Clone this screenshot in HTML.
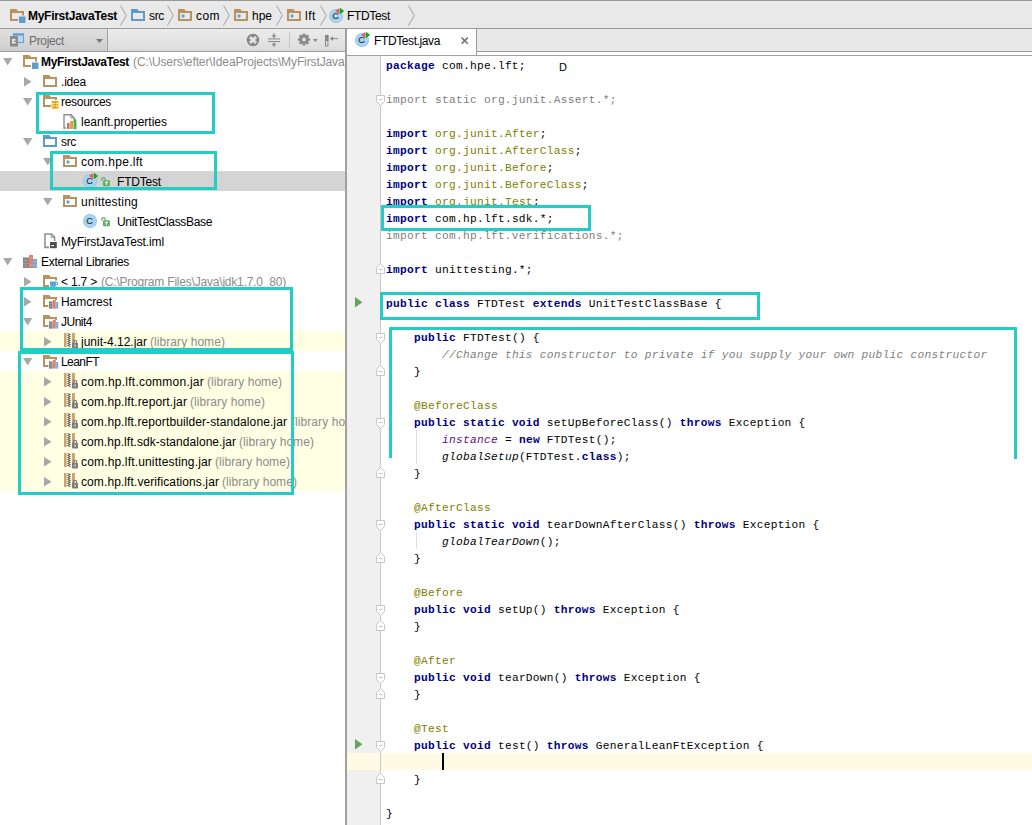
<!DOCTYPE html>
<html><head><meta charset="utf-8"><title>FTDTest</title>
<style>
html,body{margin:0;padding:0}
body{width:1032px;height:825px;position:relative;overflow:hidden;background:#fff;font-family:"Liberation Sans",sans-serif;font-size:12px;color:#000}
.a{position:absolute}
.i{position:absolute;overflow:visible}
.t{position:absolute;white-space:pre;line-height:20px;height:20px}
.b{font-weight:bold}
.g{color:#8c8c8c}
.box{position:absolute;box-sizing:border-box;border:3px solid #23cdc5}
#left{left:0;top:52px;width:345px;height:773px;overflow:hidden;background:#fff}
.row{position:absolute;left:0;width:345px;height:20px}
.code{position:absolute;left:386px;white-space:pre;font-family:"Liberation Mono",monospace;font-size:11.2px;letter-spacing:0.279px;line-height:17px;height:17px;color:#000}
.k{color:#000080;font-weight:bold}
.an{color:#808000}
.u{color:#808080}
.c{color:#808080;font-style:italic}
.sf{color:#660e7a;font-style:italic}
.sm{font-style:italic}
</style></head><body>

<div class="a" style="left:0;top:0;width:1032px;height:28px;background:#e9e9e9;border-top:1px solid #999;box-sizing:border-box"></div>
<div class="a" style="left:0;top:28px;width:1032px;height:1px;background:#999"></div>
<svg class="i" style="left:10px;top:9px" width="16" height="14" viewBox="0 0 16 14"><path d="M0 0H6.2L8 2H14V12H0Z" fill="#b8935f"/><rect x="2" y="4" width="10" height="6" fill="#e9e9e9"/><rect x="8" y="6.5" width="8" height="7.5" fill="#e9e9e9"/><rect x="9" y="7.5" width="6.5" height="6.5" fill="#5f9fcb"/></svg>
<span id="t0" class="t b" style="left:28px;top:6px;letter-spacing:-0.277px;">MyFirstJavaTest</span>
<svg class="i" style="left:120px;top:5px" width="8" height="22" viewBox="0 0 8 22"><path d="M0.5 0.5L6.3 10.5L0.5 20.5" fill="none" stroke="#a0a0a0" stroke-width="1"/></svg>
<svg class="i" style="left:131px;top:9px" width="16" height="14" viewBox="0 0 16 14"><path d="M0 0H6.2L8 2H14V12H0Z" fill="#5f9bc8"/><rect x="2" y="4" width="10" height="6" fill="#fff"/><rect x="2" y="4" width="10" height="6" fill="#e9e9e9"/></svg>
<span id="t1" class="t " style="left:149px;top:6px;letter-spacing:-0.333px;">src</span>
<svg class="i" style="left:167px;top:5px" width="8" height="22" viewBox="0 0 8 22"><path d="M0.5 0.5L6.3 10.5L0.5 20.5" fill="none" stroke="#a0a0a0" stroke-width="1"/></svg>
<svg class="i" style="left:178px;top:9px" width="16" height="14" viewBox="0 0 16 14"><path d="M0 0H6.2L8 2H14V12H0Z" fill="#b8935f"/><rect x="2" y="4" width="10" height="6" fill="#fff"/><rect x="2" y="4" width="10" height="6" fill="#e9e9e9"/><circle cx="5" cy="7" r="1.7" fill="#6ba4cd"/></svg>
<span id="t2" class="t " style="left:196px;top:6px;letter-spacing:0.443px;">com</span>
<svg class="i" style="left:223px;top:5px" width="8" height="22" viewBox="0 0 8 22"><path d="M0.5 0.5L6.3 10.5L0.5 20.5" fill="none" stroke="#a0a0a0" stroke-width="1"/></svg>
<svg class="i" style="left:234px;top:9px" width="16" height="14" viewBox="0 0 16 14"><path d="M0 0H6.2L8 2H14V12H0Z" fill="#b8935f"/><rect x="2" y="4" width="10" height="6" fill="#fff"/><rect x="2" y="4" width="10" height="6" fill="#e9e9e9"/><circle cx="5" cy="7" r="1.7" fill="#6ba4cd"/></svg>
<span id="t3" class="t " style="left:252px;top:6px;letter-spacing:-0.010px;">hpe</span>
<svg class="i" style="left:276px;top:5px" width="8" height="22" viewBox="0 0 8 22"><path d="M0.5 0.5L6.3 10.5L0.5 20.5" fill="none" stroke="#a0a0a0" stroke-width="1"/></svg>
<svg class="i" style="left:287px;top:9px" width="16" height="14" viewBox="0 0 16 14"><path d="M0 0H6.2L8 2H14V12H0Z" fill="#b8935f"/><rect x="2" y="4" width="10" height="6" fill="#fff"/><rect x="2" y="4" width="10" height="6" fill="#e9e9e9"/><circle cx="5" cy="7" r="1.7" fill="#6ba4cd"/></svg>
<span id="t4" class="t " style="left:305px;top:6px;letter-spacing:0.552px;">lft</span>
<svg class="i" style="left:320px;top:5px" width="8" height="22" viewBox="0 0 8 22"><path d="M0.5 0.5L6.3 10.5L0.5 20.5" fill="none" stroke="#a0a0a0" stroke-width="1"/></svg>
<svg class="i" style="left:329px;top:9px" width="16" height="16" viewBox="0 0 16 16"><circle cx="7" cy="7" r="7" fill="#8fc3ea"/><circle cx="7" cy="7" r="6.2" fill="#a9d5f3"/><text x="6.6" y="10.3" font-family="Liberation Sans, sans-serif" font-size="9.2" text-anchor="middle" fill="#26333d" stroke="#26333d" stroke-width="0.15">C</text><path d="M10.4 -1V5L6 2Z" fill="#d9625b"/><path d="M11 -1.2V5.2L15.2 2Z" fill="#10a813"/></svg>
<span id="t5" class="t " style="left:347px;top:6px;letter-spacing:-0.335px;">FTDTest</span>
<svg class="i" style="left:408px;top:5px" width="8" height="22" viewBox="0 0 8 22"><path d="M0.5 0.5L6.3 10.5L0.5 20.5" fill="none" stroke="#a0a0a0" stroke-width="1"/></svg>
<div class="a" style="left:0;top:29px;width:345px;height:22px;background:linear-gradient(#ececec,#dcdcdc)"></div>
<div class="a" style="left:0;top:29px;width:108px;height:22px;background:linear-gradient(#e0e0e0,#cecece);border-right:1px solid #a2a2a2;box-sizing:border-box"></div>
<div class="a" style="left:0;top:51px;width:345px;height:1px;background:#9e9e9e"></div>
<svg class="i" style="left:9px;top:33px" width="16" height="14" viewBox="0 0 16 14"><rect x="4.5" y="1" width="10" height="8.5" fill="#b5daf5" stroke="#6aa3cf" stroke-width="1"/><rect x="4" y="0.5" width="11" height="2" fill="#5d9ccb"/><rect x="1" y="3" width="8" height="10.5" fill="#8c8c8c"/><rect x="3.4" y="6.2" width="3.2" height="1.3" fill="#fff"/><rect x="3.4" y="9" width="3.2" height="1.3" fill="#fff"/><rect x="3.4" y="6.2" width="1.1" height="4.1" fill="#fff"/></svg>
<span id="t6" class="t " style="left:29px;top:31px;letter-spacing:-0.337px;color:#6b6b6b">Project</span>
<svg class="i" style="left:96px;top:39px" width="8" height="5" viewBox="0 0 8 5"><path d="M0 0H7L3.5 4Z" fill="#7a7a7a"/></svg>
<svg class="i" style="left:246px;top:33px" width="14" height="14" viewBox="0 0 14 14"><circle cx="7" cy="7" r="5.3" fill="none" stroke="#868686" stroke-width="1.9"/><path d="M7 1V4.4M7 9.6V13M1 7H4.4M9.6 7H13" stroke="#868686" stroke-width="2.4"/></svg>
<svg class="i" style="left:268px;top:33px" width="13" height="15" viewBox="0 0 13 15"><path d="M0 5.9H12M0 8.6H12" stroke="#868686" stroke-width="1"/><path d="M6 0V4.5M6 14V10" stroke="#868686" stroke-width="1"/><path d="M3.6 2.2H8.4L6 4.9Z M3.6 12.3H8.4L6 9.6Z" fill="#868686"/></svg>
<div class="a" style="left:289px;top:32px;width:1px;height:16px;background:#c4c4c4"></div>
<svg class="i" style="left:298px;top:33px" width="13" height="13" viewBox="0 0 13 13"><g transform="translate(6 6.5)"><rect x="-1.3" y="-6" width="2.6" height="12" fill="#868686" transform="rotate(0)"/><rect x="-1.3" y="-6" width="2.6" height="12" fill="#868686" transform="rotate(45)"/><rect x="-1.3" y="-6" width="2.6" height="12" fill="#868686" transform="rotate(90)"/><rect x="-1.3" y="-6" width="2.6" height="12" fill="#868686" transform="rotate(135)"/><circle r="4.3" fill="#868686"/><circle r="1.9" fill="#e2e2e2"/></g></svg>
<svg class="i" style="left:313px;top:39px" width="5" height="4" viewBox="0 0 5 4"><path d="M0 0H4.6L2.3 3Z" fill="#868686"/></svg>
<svg class="i" style="left:325px;top:35px" width="14" height="12" viewBox="0 0 14 12"><rect x="0.5" y="0.5" width="2.4" height="10.4" fill="#e6e6e6" stroke="#868686" stroke-width="1"/><rect x="0" y="0" width="3.4" height="6" fill="#868686"/><path d="M5.5 3.6H13" stroke="#868686" stroke-width="1"/><path d="M5 3.6L8 1.2V6Z" fill="#868686"/></svg>
<div class="a" style="left:0;top:52px;width:345px;height:773px;background:#fff"></div>
<div class="a" style="left:0;top:331px;width:345px;height:20px;background:#ffffe4"></div>
<div class="a" style="left:0;top:371px;width:345px;height:20px;background:#ffffe4"></div>
<div class="a" style="left:0;top:391px;width:345px;height:20px;background:#ffffe4"></div>
<div class="a" style="left:0;top:411px;width:345px;height:20px;background:#ffffe4"></div>
<div class="a" style="left:0;top:431px;width:345px;height:20px;background:#ffffe4"></div>
<div class="a" style="left:0;top:451px;width:345px;height:20px;background:#ffffe4"></div>
<div class="a" style="left:0;top:471px;width:345px;height:20px;background:#ffffe4"></div>
<div class="a" style="left:0;top:171px;width:345px;height:20px;background:#d4d4d4"></div>
<div class="a" style="left:0;top:52px;width:345px;height:773px;overflow:hidden">
<svg class="i" style="left:3px;top:6px" width="10" height="8" viewBox="0 0 10 8"><path d="M0 0H9.4L4.7 7.6Z" fill="#a8a8a8"/></svg>
<svg class="i" style="left:23px;top:3px" width="16" height="14" viewBox="0 0 16 14"><path d="M0 0H6.2L8 2H14V12H0Z" fill="#b8935f"/><rect x="2" y="4" width="10" height="6" fill="#fff"/><rect x="8" y="6.5" width="8" height="7.5" fill="#fff"/><rect x="9" y="7.5" width="6.5" height="6.5" fill="#5f9fcb"/></svg>
<span id="t7" class="t b" style="left:41px;top:0px;letter-spacing:-0.344px;">MyFirstJavaTest</span>
<span id="t8" class="t g" style="left:133px;top:0px;letter-spacing:-0.113px;">(C:\Users\efter\IdeaProjects\MyFirstJavaTest)</span>
<svg class="i" style="left:24px;top:25px" width="8" height="10" viewBox="0 0 8 10"><path d="M0 0V9.4L7.6 4.7Z" fill="#a8a8a8"/></svg>
<svg class="i" style="left:43px;top:23px" width="16" height="14" viewBox="0 0 16 14"><path d="M0 0H6.2L8 2H14V12H0Z" fill="#b8935f"/><rect x="2" y="4" width="10" height="6" fill="#fff"/></svg>
<span id="t9" class="t " style="left:61px;top:20px;letter-spacing:-0.206px;">.idea</span>
<svg class="i" style="left:23px;top:46px" width="10" height="8" viewBox="0 0 10 8"><path d="M0 0H9.4L4.7 7.6Z" fill="#a8a8a8"/></svg>
<svg class="i" style="left:43px;top:43px" width="16" height="14" viewBox="0 0 16 14"><path d="M0 0H6.2L8 2H14V12H0Z" fill="#b8935f"/><rect x="2" y="4" width="10" height="6" fill="#fff"/><rect x="8" y="5" width="8" height="9" fill="#fff"/><rect x="8.6" y="6" width="7" height="7.6" fill="#f2b11c"/><path d="M8.6 8.5H15.6M8.6 11H15.6" stroke="#fff3c4" stroke-width="0.9"/><path d="M12 6V13.6" stroke="#c98a10" stroke-width="0.8"/></svg>
<span id="t10" class="t " style="left:61px;top:40px;letter-spacing:-0.299px;">resources</span>
<svg class="i" style="left:63px;top:62px" width="14" height="15" viewBox="0 0 14 15"><path d="M1 0.7H8L11.3 4V14H1Z" fill="#fff" stroke="#8d8d8d" stroke-width="1.4"/><path d="M8 0.7V4H11.3" fill="none" stroke="#8d8d8d" stroke-width="1"/><rect x="3" y="8" width="13" height="7" fill="#fff"/><rect x="4" y="9" width="2.6" height="6" fill="#e8665e"/><rect x="7.2" y="7" width="2.8" height="8" fill="#e69a3c"/><rect x="10.6" y="5.4" width="2.8" height="9.6" fill="#47b04b"/></svg>
<span id="t11" class="t " style="left:81px;top:60px;letter-spacing:-0.004px;">leanft.properties</span>
<svg class="i" style="left:23px;top:86px" width="10" height="8" viewBox="0 0 10 8"><path d="M0 0H9.4L4.7 7.6Z" fill="#a8a8a8"/></svg>
<svg class="i" style="left:43px;top:83px" width="16" height="14" viewBox="0 0 16 14"><path d="M0 0H6.2L8 2H14V12H0Z" fill="#5f9bc8"/><rect x="2" y="4" width="10" height="6" fill="#fff"/></svg>
<span id="t12" class="t " style="left:61px;top:80px;letter-spacing:-0.333px;">src</span>
<svg class="i" style="left:43px;top:106px" width="10" height="8" viewBox="0 0 10 8"><path d="M0 0H9.4L4.7 7.6Z" fill="#a8a8a8"/></svg>
<svg class="i" style="left:63px;top:103px" width="16" height="14" viewBox="0 0 16 14"><path d="M0 0H6.2L8 2H14V12H0Z" fill="#b8935f"/><rect x="2" y="4" width="10" height="6" fill="#fff"/><rect x="2" y="4" width="10" height="6" fill="#fff"/><circle cx="5" cy="7" r="1.7" fill="#6ba4cd"/></svg>
<span id="t13" class="t " style="left:81px;top:100px;letter-spacing:0.300px;">com.hpe.lft</span>
<svg class="i" style="left:83px;top:122px" width="16" height="16" viewBox="0 0 16 16"><circle cx="7" cy="7" r="7" fill="#8fc3ea"/><circle cx="7" cy="7" r="6.2" fill="#a9d5f3"/><text x="6.6" y="10.3" font-family="Liberation Sans, sans-serif" font-size="9.2" text-anchor="middle" fill="#26333d" stroke="#26333d" stroke-width="0.15">C</text><path d="M10.4 -1V5L6 2Z" fill="#d9625b"/><path d="M11 -1.2V5.2L15.2 2Z" fill="#10a813"/></svg>
<svg class="i" style="left:100px;top:125px" width="11" height="10" viewBox="0 0 11 10"><rect x="3" y="3.2" width="7" height="6" rx="1" fill="#62b164"/><path d="M1.9 3.8V2.2A1.6 1.6 0 0 1 5.1 2.2V3.4" fill="none" stroke="#62b164" stroke-width="1.3"/><path d="M5 5.4H8M6.5 5.4V7.8" stroke="#fff" stroke-width="1.1"/></svg>
<span id="t14" class="t " style="left:117px;top:120px;letter-spacing:-0.192px;">FTDTest</span>
<svg class="i" style="left:43px;top:146px" width="10" height="8" viewBox="0 0 10 8"><path d="M0 0H9.4L4.7 7.6Z" fill="#a8a8a8"/></svg>
<svg class="i" style="left:63px;top:143px" width="16" height="14" viewBox="0 0 16 14"><path d="M0 0H6.2L8 2H14V12H0Z" fill="#b8935f"/><rect x="2" y="4" width="10" height="6" fill="#fff"/><rect x="2" y="4" width="10" height="6" fill="#fff"/><circle cx="5" cy="7" r="1.7" fill="#6ba4cd"/></svg>
<span id="t15" class="t " style="left:81px;top:140px;letter-spacing:0.209px;">unittesting</span>
<svg class="i" style="left:83px;top:162px" width="16" height="16" viewBox="0 0 16 16"><circle cx="7" cy="7" r="7" fill="#8fc3ea"/><circle cx="7" cy="7" r="6.2" fill="#a9d5f3"/><text x="6.6" y="10.3" font-family="Liberation Sans, sans-serif" font-size="9.2" text-anchor="middle" fill="#26333d" stroke="#26333d" stroke-width="0.15">C</text></svg>
<svg class="i" style="left:100px;top:165px" width="11" height="10" viewBox="0 0 11 10"><rect x="3" y="3.2" width="7" height="6" rx="1" fill="#62b164"/><path d="M1.9 3.8V2.2A1.6 1.6 0 0 1 5.1 2.2V3.4" fill="none" stroke="#62b164" stroke-width="1.3"/><path d="M5 5.4H8M6.5 5.4V7.8" stroke="#fff" stroke-width="1.1"/></svg>
<span id="t16" class="t " style="left:117px;top:160px;letter-spacing:-0.336px;">UnitTestClassBase</span>
<svg class="i" style="left:44px;top:181px" width="14" height="16" viewBox="0 0 14 16"><path d="M1 1H7.4L10.6 4.2V14.4H1Z" fill="#fff" stroke="#909090" stroke-width="1.6"/><path d="M7.2 1V4.4H10.6" fill="none" stroke="#909090" stroke-width="1"/><rect x="5" y="8" width="8.5" height="8" fill="#fff"/><rect x="6" y="9" width="6.8" height="6.2" fill="#4e4e4e"/><rect x="7.2" y="12" width="2.8" height="1.1" fill="#fff"/></svg>
<span id="t17" class="t " style="left:61px;top:180px;letter-spacing:-0.123px;">MyFirstJavaTest.iml</span>
<svg class="i" style="left:3px;top:206px" width="10" height="8" viewBox="0 0 10 8"><path d="M0 0H9.4L4.7 7.6Z" fill="#a8a8a8"/></svg>
<svg class="i" style="left:23px;top:203px" width="15" height="13" viewBox="0 0 15 13"><rect x="0" y="2.5" width="6" height="10.5" fill="#7d7d7d"/><path d="M0 5.5H6M0 8.5H6M0 11H6" stroke="#a8a8a8" stroke-width="0.7"/><path d="M2 2.5V13M4 2.5V13" stroke="#a8a8a8" stroke-width="0.6"/><rect x="6" y="0" width="4" height="13" fill="#e27c76"/><path d="M6 3H10M6 10H10" stroke="#eea39e" stroke-width="0.8"/><rect x="10" y="4" width="4" height="9" fill="#6fa9d8"/><path d="M10 6.5H14M10 10.5H14" stroke="#9cc5e6" stroke-width="0.8"/></svg>
<span id="t18" class="t " style="left:41px;top:200px;letter-spacing:-0.299px;">External Libraries</span>
<svg class="i" style="left:24px;top:225px" width="8" height="10" viewBox="0 0 8 10"><path d="M0 0V9.4L7.6 4.7Z" fill="#a8a8a8"/></svg>
<svg class="i" style="left:43px;top:223px" width="16" height="14" viewBox="0 0 16 14"><path d="M0 0H6.2L8 2H14V12H0Z" fill="#b8935f"/><rect x="2" y="4" width="10" height="6" fill="#fff"/><rect x="6" y="5.5" width="10" height="8.5" fill="#fff"/><path d="M7 6.5H13V9.5A3 3 0 0 1 7 9.5Z" fill="#5aa2d8"/><path d="M13 7.2H14.6V9.4H13" fill="none" stroke="#5aa2d8" stroke-width="1"/><rect x="6.6" y="11.6" width="7.4" height="0.9" fill="#8fc0e6"/></svg>
<span id="t19" class="t " style="left:61px;top:220px;letter-spacing:-0.196px;">&lt; 1.7 &gt;</span>
<span id="t20" class="t g" style="left:101px;top:220px;letter-spacing:-0.202px;">(C:\Program Files\Java\jdk1.7.0_80)</span>
<svg class="i" style="left:24px;top:245px" width="8" height="10" viewBox="0 0 8 10"><path d="M0 0V9.4L7.6 4.7Z" fill="#a8a8a8"/></svg>
<svg class="i" style="left:43px;top:243px" width="16" height="14" viewBox="0 0 16 14"><path d="M0 0H6.2L8 2H14V12H0Z" fill="#b8935f"/><rect x="2" y="4" width="10" height="6" fill="#fff"/><rect x="5.4" y="5" width="10" height="9" fill="#fff"/><rect x="6" y="6.4" width="3.6" height="7.2" fill="#7d7d7d"/><path d="M6 8.5H9.6M6 11H9.6" stroke="#a5a5a5" stroke-width="0.7"/><path d="M7.8 6.4V13.6" stroke="#a5a5a5" stroke-width="0.6"/><rect x="10" y="5" width="2.8" height="8.6" fill="#e27c76"/><rect x="13.2" y="7" width="2" height="6.6" fill="#6fa9d8"/></svg>
<span id="t21" class="t " style="left:61px;top:240px;letter-spacing:-0.043px;">Hamcrest</span>
<svg class="i" style="left:23px;top:266px" width="10" height="8" viewBox="0 0 10 8"><path d="M0 0H9.4L4.7 7.6Z" fill="#a8a8a8"/></svg>
<svg class="i" style="left:43px;top:263px" width="16" height="14" viewBox="0 0 16 14"><path d="M0 0H6.2L8 2H14V12H0Z" fill="#b8935f"/><rect x="2" y="4" width="10" height="6" fill="#fff"/><rect x="5.4" y="5" width="10" height="9" fill="#fff"/><rect x="6" y="6.4" width="3.6" height="7.2" fill="#7d7d7d"/><path d="M6 8.5H9.6M6 11H9.6" stroke="#a5a5a5" stroke-width="0.7"/><path d="M7.8 6.4V13.6" stroke="#a5a5a5" stroke-width="0.6"/><rect x="10" y="5" width="2.8" height="8.6" fill="#e27c76"/><rect x="13.2" y="7" width="2" height="6.6" fill="#6fa9d8"/></svg>
<span id="t22" class="t " style="left:61px;top:260px;letter-spacing:-0.503px;">JUnit4</span>
<svg class="i" style="left:44px;top:285px" width="8" height="10" viewBox="0 0 8 10"><path d="M0 0V9.4L7.6 4.7Z" fill="#a8a8a8"/></svg>
<svg class="i" style="left:64px;top:281px" width="14" height="16" viewBox="0 0 14 16"><rect x="0" y="0" width="2.6" height="14" fill="#caa46c"/><rect x="7.9" y="0" width="3" height="14" fill="#caa46c"/><path d="M3.6 0.5L6.4 1.5L3.6 2.5L6.4 3.5L3.6 4.5L6.4 5.5L3.6 6.5L6.4 7.5L3.6 8.5L6.4 9.5L3.6 10.5L6.4 11.5L3.6 12.5L6.4 13.5" fill="none" stroke="#4d4d4d" stroke-width="0.9"/><rect x="8" y="10" width="6" height="5.4" rx="0.8" fill="#7b7b7b"/><path d="M9.4 10.4V9A1.6 1.6 0 0 1 12.6 9V10.4" fill="none" stroke="#7b7b7b" stroke-width="1.2"/><rect x="10.4" y="11.6" width="1.3" height="2" fill="#e6e6e6"/></svg>
<span id="t23" class="t " style="left:81px;top:280px;letter-spacing:-0.003px;">junit-4.12.jar</span>
<span id="t24" class="t g" style="left:150px;top:280px;letter-spacing:0.070px;">(library home)</span>
<svg class="i" style="left:23px;top:306px" width="10" height="8" viewBox="0 0 10 8"><path d="M0 0H9.4L4.7 7.6Z" fill="#a8a8a8"/></svg>
<svg class="i" style="left:43px;top:303px" width="16" height="14" viewBox="0 0 16 14"><path d="M0 0H6.2L8 2H14V12H0Z" fill="#b8935f"/><rect x="2" y="4" width="10" height="6" fill="#fff"/><rect x="5.4" y="5" width="10" height="9" fill="#fff"/><rect x="6" y="6.4" width="3.6" height="7.2" fill="#7d7d7d"/><path d="M6 8.5H9.6M6 11H9.6" stroke="#a5a5a5" stroke-width="0.7"/><path d="M7.8 6.4V13.6" stroke="#a5a5a5" stroke-width="0.6"/><rect x="10" y="5" width="2.8" height="8.6" fill="#e27c76"/><rect x="13.2" y="7" width="2" height="6.6" fill="#6fa9d8"/></svg>
<span id="t25" class="t " style="left:61px;top:300px;letter-spacing:-0.560px;">LeanFT</span>
<svg class="i" style="left:44px;top:325px" width="8" height="10" viewBox="0 0 8 10"><path d="M0 0V9.4L7.6 4.7Z" fill="#a8a8a8"/></svg>
<svg class="i" style="left:64px;top:321px" width="14" height="16" viewBox="0 0 14 16"><rect x="0" y="0" width="2.6" height="14" fill="#caa46c"/><rect x="7.9" y="0" width="3" height="14" fill="#caa46c"/><path d="M3.6 0.5L6.4 1.5L3.6 2.5L6.4 3.5L3.6 4.5L6.4 5.5L3.6 6.5L6.4 7.5L3.6 8.5L6.4 9.5L3.6 10.5L6.4 11.5L3.6 12.5L6.4 13.5" fill="none" stroke="#4d4d4d" stroke-width="0.9"/><rect x="8" y="10" width="6" height="5.4" rx="0.8" fill="#7b7b7b"/><path d="M9.4 10.4V9A1.6 1.6 0 0 1 12.6 9V10.4" fill="none" stroke="#7b7b7b" stroke-width="1.2"/><rect x="10.4" y="11.6" width="1.3" height="2" fill="#e6e6e6"/></svg>
<span id="t26" class="t " style="left:81px;top:320px;letter-spacing:0.236px;">com.hp.lft.common.jar</span>
<span id="t27" class="t g" style="left:207px;top:320px;letter-spacing:0.070px;">(library home)</span>
<svg class="i" style="left:44px;top:345px" width="8" height="10" viewBox="0 0 8 10"><path d="M0 0V9.4L7.6 4.7Z" fill="#a8a8a8"/></svg>
<svg class="i" style="left:64px;top:341px" width="14" height="16" viewBox="0 0 14 16"><rect x="0" y="0" width="2.6" height="14" fill="#caa46c"/><rect x="7.9" y="0" width="3" height="14" fill="#caa46c"/><path d="M3.6 0.5L6.4 1.5L3.6 2.5L6.4 3.5L3.6 4.5L6.4 5.5L3.6 6.5L6.4 7.5L3.6 8.5L6.4 9.5L3.6 10.5L6.4 11.5L3.6 12.5L6.4 13.5" fill="none" stroke="#4d4d4d" stroke-width="0.9"/><rect x="8" y="10" width="6" height="5.4" rx="0.8" fill="#7b7b7b"/><path d="M9.4 10.4V9A1.6 1.6 0 0 1 12.6 9V10.4" fill="none" stroke="#7b7b7b" stroke-width="1.2"/><rect x="10.4" y="11.6" width="1.3" height="2" fill="#e6e6e6"/></svg>
<span id="t28" class="t " style="left:81px;top:340px;letter-spacing:0.125px;">com.hp.lft.report.jar</span>
<span id="t29" class="t g" style="left:190px;top:340px;letter-spacing:0.070px;">(library home)</span>
<svg class="i" style="left:44px;top:365px" width="8" height="10" viewBox="0 0 8 10"><path d="M0 0V9.4L7.6 4.7Z" fill="#a8a8a8"/></svg>
<svg class="i" style="left:64px;top:361px" width="14" height="16" viewBox="0 0 14 16"><rect x="0" y="0" width="2.6" height="14" fill="#caa46c"/><rect x="7.9" y="0" width="3" height="14" fill="#caa46c"/><path d="M3.6 0.5L6.4 1.5L3.6 2.5L6.4 3.5L3.6 4.5L6.4 5.5L3.6 6.5L6.4 7.5L3.6 8.5L6.4 9.5L3.6 10.5L6.4 11.5L3.6 12.5L6.4 13.5" fill="none" stroke="#4d4d4d" stroke-width="0.9"/><rect x="8" y="10" width="6" height="5.4" rx="0.8" fill="#7b7b7b"/><path d="M9.4 10.4V9A1.6 1.6 0 0 1 12.6 9V10.4" fill="none" stroke="#7b7b7b" stroke-width="1.2"/><rect x="10.4" y="11.6" width="1.3" height="2" fill="#e6e6e6"/></svg>
<span id="t30" class="t " style="left:81px;top:360px;letter-spacing:0.100px;">com.hp.lft.reportbuilder-standalone.jar</span>
<span id="t31" class="t g" style="left:291px;top:360px;letter-spacing:0.070px;">(library home)</span>
<svg class="i" style="left:44px;top:385px" width="8" height="10" viewBox="0 0 8 10"><path d="M0 0V9.4L7.6 4.7Z" fill="#a8a8a8"/></svg>
<svg class="i" style="left:64px;top:381px" width="14" height="16" viewBox="0 0 14 16"><rect x="0" y="0" width="2.6" height="14" fill="#caa46c"/><rect x="7.9" y="0" width="3" height="14" fill="#caa46c"/><path d="M3.6 0.5L6.4 1.5L3.6 2.5L6.4 3.5L3.6 4.5L6.4 5.5L3.6 6.5L6.4 7.5L3.6 8.5L6.4 9.5L3.6 10.5L6.4 11.5L3.6 12.5L6.4 13.5" fill="none" stroke="#4d4d4d" stroke-width="0.9"/><rect x="8" y="10" width="6" height="5.4" rx="0.8" fill="#7b7b7b"/><path d="M9.4 10.4V9A1.6 1.6 0 0 1 12.6 9V10.4" fill="none" stroke="#7b7b7b" stroke-width="1.2"/><rect x="10.4" y="11.6" width="1.3" height="2" fill="#e6e6e6"/></svg>
<span id="t32" class="t " style="left:81px;top:380px;letter-spacing:0.054px;">com.hp.lft.sdk-standalone.jar</span>
<span id="t33" class="t g" style="left:239px;top:380px;letter-spacing:0.070px;">(library home)</span>
<svg class="i" style="left:44px;top:405px" width="8" height="10" viewBox="0 0 8 10"><path d="M0 0V9.4L7.6 4.7Z" fill="#a8a8a8"/></svg>
<svg class="i" style="left:64px;top:401px" width="14" height="16" viewBox="0 0 14 16"><rect x="0" y="0" width="2.6" height="14" fill="#caa46c"/><rect x="7.9" y="0" width="3" height="14" fill="#caa46c"/><path d="M3.6 0.5L6.4 1.5L3.6 2.5L6.4 3.5L3.6 4.5L6.4 5.5L3.6 6.5L6.4 7.5L3.6 8.5L6.4 9.5L3.6 10.5L6.4 11.5L3.6 12.5L6.4 13.5" fill="none" stroke="#4d4d4d" stroke-width="0.9"/><rect x="8" y="10" width="6" height="5.4" rx="0.8" fill="#7b7b7b"/><path d="M9.4 10.4V9A1.6 1.6 0 0 1 12.6 9V10.4" fill="none" stroke="#7b7b7b" stroke-width="1.2"/><rect x="10.4" y="11.6" width="1.3" height="2" fill="#e6e6e6"/></svg>
<span id="t34" class="t " style="left:81px;top:400px;letter-spacing:0.164px;">com.hp.lft.unittesting.jar</span>
<span id="t35" class="t g" style="left:215px;top:400px;letter-spacing:0.070px;">(library home)</span>
<svg class="i" style="left:44px;top:425px" width="8" height="10" viewBox="0 0 8 10"><path d="M0 0V9.4L7.6 4.7Z" fill="#a8a8a8"/></svg>
<svg class="i" style="left:64px;top:421px" width="14" height="16" viewBox="0 0 14 16"><rect x="0" y="0" width="2.6" height="14" fill="#caa46c"/><rect x="7.9" y="0" width="3" height="14" fill="#caa46c"/><path d="M3.6 0.5L6.4 1.5L3.6 2.5L6.4 3.5L3.6 4.5L6.4 5.5L3.6 6.5L6.4 7.5L3.6 8.5L6.4 9.5L3.6 10.5L6.4 11.5L3.6 12.5L6.4 13.5" fill="none" stroke="#4d4d4d" stroke-width="0.9"/><rect x="8" y="10" width="6" height="5.4" rx="0.8" fill="#7b7b7b"/><path d="M9.4 10.4V9A1.6 1.6 0 0 1 12.6 9V10.4" fill="none" stroke="#7b7b7b" stroke-width="1.2"/><rect x="10.4" y="11.6" width="1.3" height="2" fill="#e6e6e6"/></svg>
<span id="t36" class="t " style="left:81px;top:420px;letter-spacing:0.093px;">com.hp.lft.verifications.jar</span>
<span id="t37" class="t g" style="left:222px;top:420px;letter-spacing:0.070px;">(library home)</span>
</div>
<div class="box" style="left:36px;top:92px;width:179px;height:42px;"></div>
<div class="box" style="left:50px;top:151px;width:167px;height:39px;"></div>
<div class="box" style="left:20px;top:287px;width:273px;height:64px;"></div>
<div class="box" style="left:18px;top:351px;width:276px;height:144px;"></div>
<div class="a" style="left:345px;top:29px;width:2px;height:796px;background:#a0a0a0"></div>
<div class="a" style="left:347px;top:29px;width:685px;height:22px;background:#e8e8e8"></div>
<div class="a" style="left:347px;top:51px;width:685px;height:1px;background:#9c9c9c"></div>
<div class="a" style="left:347px;top:52px;width:685px;height:3px;background:#fff"></div>
<div class="a" style="left:347px;top:29px;width:130px;height:26px;background:#fff;border-right:1px solid #9c9c9c;box-sizing:border-box"></div>
<div class="a" style="left:347px;top:55px;width:685px;height:1px;background:#a0a0a0"></div>
<svg class="i" style="left:355px;top:33px" width="16" height="16" viewBox="0 0 16 16"><circle cx="7" cy="7" r="7" fill="#8fc3ea"/><circle cx="7" cy="7" r="6.2" fill="#a9d5f3"/><text x="6.6" y="10.3" font-family="Liberation Sans, sans-serif" font-size="9.2" text-anchor="middle" fill="#26333d" stroke="#26333d" stroke-width="0.15">C</text><path d="M10.4 -1V5L6 2Z" fill="#d9625b"/><path d="M11 -1.2V5.2L15.2 2Z" fill="#10a813"/></svg>
<span id="t38" class="t " style="left:374px;top:31px;letter-spacing:-0.391px;">FTDTest.java</span>
<svg class="i" style="left:461px;top:37px" width="8" height="8" viewBox="0 0 8 8"><path d="M0.6 0.6L6.8 6.8M6.8 0.6L0.6 6.8" stroke="#757575" stroke-width="1.6"/></svg>
<div class="a" style="left:347px;top:56px;width:685px;height:769px;background:#fff"></div>
<div class="a" style="left:347px;top:56px;width:33px;height:769px;background:#f0f0f0"></div>
<div class="a" style="left:347px;top:753px;width:685px;height:17px;background:#fffae3"></div>
<div class="a" style="left:380px;top:56px;width:1px;height:769px;background:#c9c9c9"></div>
<div class="code" style="top:58px"><span class="k">package</span> com.hpe.lft;</div>
<div class="code" style="top:92px"><span class="u">import static org.junit.Assert.*;</span></div>
<div class="code" style="top:126px"><span class="k">import</span> <span class="an">org.junit.After</span>;</div>
<div class="code" style="top:143px"><span class="k">import</span> <span class="an">org.junit.AfterClass</span>;</div>
<div class="code" style="top:160px"><span class="k">import</span> <span class="an">org.junit.Before</span>;</div>
<div class="code" style="top:177px"><span class="k">import</span> <span class="an">org.junit.BeforeClass</span>;</div>
<div class="code" style="top:194px"><span class="k">import</span> <span class="an">org.junit.Test</span>;</div>
<div class="code" style="top:211px"><span class="k">import</span> com.hp.lft.sdk.*;</div>
<div class="code" style="top:228px"><span class="u">import com.hp.lft.verifications.*;</span></div>
<div class="code" style="top:262px"><span class="k">import</span> unittesting.*;</div>
<div class="code" style="top:296px"><span class="k">public class</span> FTDTest <span class="k">extends</span> UnitTestClassBase {</div>
<div class="code" style="top:330px">    <span class="k">public</span> FTDTest() {</div>
<div class="code" style="top:347px">        <span class="c">//Change this constructor to private if you supply your own public constructor</span></div>
<div class="code" style="top:364px">    }</div>
<div class="code" style="top:398px">    <span class="an">@BeforeClass</span></div>
<div class="code" style="top:415px">    <span class="k">public static void</span> setUpBeforeClass() <span class="k">throws</span> Exception {</div>
<div class="code" style="top:432px">        <span class="sf">instance</span> = <span class="k">new</span> FTDTest();</div>
<div class="code" style="top:449px">        <span class="sm">globalSetup</span>(FTDTest.<span class="k">class</span>);</div>
<div class="code" style="top:466px">    }</div>
<div class="code" style="top:500px">    <span class="an">@AfterClass</span></div>
<div class="code" style="top:517px">    <span class="k">public static void</span> tearDownAfterClass() <span class="k">throws</span> Exception {</div>
<div class="code" style="top:534px">        <span class="sm">globalTearDown</span>();</div>
<div class="code" style="top:551px">    }</div>
<div class="code" style="top:585px">    <span class="an">@Before</span></div>
<div class="code" style="top:602px">    <span class="k">public void</span> setUp() <span class="k">throws</span> Exception {</div>
<div class="code" style="top:619px">    }</div>
<div class="code" style="top:653px">    <span class="an">@After</span></div>
<div class="code" style="top:670px">    <span class="k">public void</span> tearDown() <span class="k">throws</span> Exception {</div>
<div class="code" style="top:687px">    }</div>
<div class="code" style="top:721px">    <span class="an">@Test</span></div>
<div class="code" style="top:738px">    <span class="k">public void</span> test() <span class="k">throws</span> GeneralLeanFtException {</div>
<div class="code" style="top:772px">    }</div>
<div class="code" style="top:806px">}</div>
<span class="a" style="left:559px;top:60px;font-size:11px;line-height:14px;font-family:'Liberation Sans',sans-serif">D</span>
<div class="a" style="left:416px;top:430px;width:1px;height:34px;background:#dedede"></div>
<div class="a" style="left:416px;top:532px;width:1px;height:17px;background:#dedede"></div>
<div class="a" style="left:442px;top:753px;width:2px;height:17px;background:#000"></div>
<svg class="i" style="left:355px;top:297px" width="8" height="11" viewBox="0 0 8 11"><path d="M0 0V10.4L7.4 5.2Z" fill="#62a463"/></svg>
<svg class="i" style="left:355px;top:739px" width="8" height="11" viewBox="0 0 8 11"><path d="M0 0V10.4L7.4 5.2Z" fill="#62a463"/></svg>
<svg class="i" style="left:376px;top:95px" width="10" height="12" viewBox="0 0 10 12"><path d="M0.5 0.5H8.5V6.5L4.5 10.5L0.5 6.5Z" fill="#fff" stroke="#c6c6c6" stroke-width="1"/><path d="M2.5 4.5H6.5" stroke="#c6c6c6" stroke-width="1"/></svg>
<svg class="i" style="left:376px;top:263px" width="10" height="12" viewBox="0 0 10 12"><path d="M0.5 10.5H8.5V4.5L4.5 0.5L0.5 4.5Z" fill="#fff" stroke="#c6c6c6" stroke-width="1"/><path d="M2.5 6.5H6.5" stroke="#c6c6c6" stroke-width="1"/></svg>
<svg class="i" style="left:376px;top:333px" width="10" height="12" viewBox="0 0 10 12"><path d="M0.5 0.5H8.5V6.5L4.5 10.5L0.5 6.5Z" fill="#fff" stroke="#c6c6c6" stroke-width="1"/><path d="M2.5 4.5H6.5" stroke="#c6c6c6" stroke-width="1"/></svg>
<svg class="i" style="left:376px;top:365px" width="10" height="12" viewBox="0 0 10 12"><path d="M0.5 10.5H8.5V4.5L4.5 0.5L0.5 4.5Z" fill="#fff" stroke="#c6c6c6" stroke-width="1"/><path d="M2.5 6.5H6.5" stroke="#c6c6c6" stroke-width="1"/></svg>
<svg class="i" style="left:376px;top:418px" width="10" height="12" viewBox="0 0 10 12"><path d="M0.5 0.5H8.5V6.5L4.5 10.5L0.5 6.5Z" fill="#fff" stroke="#c6c6c6" stroke-width="1"/><path d="M2.5 4.5H6.5" stroke="#c6c6c6" stroke-width="1"/></svg>
<svg class="i" style="left:376px;top:467px" width="10" height="12" viewBox="0 0 10 12"><path d="M0.5 10.5H8.5V4.5L4.5 0.5L0.5 4.5Z" fill="#fff" stroke="#c6c6c6" stroke-width="1"/><path d="M2.5 6.5H6.5" stroke="#c6c6c6" stroke-width="1"/></svg>
<svg class="i" style="left:376px;top:520px" width="10" height="12" viewBox="0 0 10 12"><path d="M0.5 0.5H8.5V6.5L4.5 10.5L0.5 6.5Z" fill="#fff" stroke="#c6c6c6" stroke-width="1"/><path d="M2.5 4.5H6.5" stroke="#c6c6c6" stroke-width="1"/></svg>
<svg class="i" style="left:376px;top:552px" width="10" height="12" viewBox="0 0 10 12"><path d="M0.5 10.5H8.5V4.5L4.5 0.5L0.5 4.5Z" fill="#fff" stroke="#c6c6c6" stroke-width="1"/><path d="M2.5 6.5H6.5" stroke="#c6c6c6" stroke-width="1"/></svg>
<svg class="i" style="left:376px;top:605px" width="10" height="12" viewBox="0 0 10 12"><path d="M0.5 0.5H8.5V6.5L4.5 10.5L0.5 6.5Z" fill="#fff" stroke="#c6c6c6" stroke-width="1"/><path d="M2.5 4.5H6.5" stroke="#c6c6c6" stroke-width="1"/></svg>
<svg class="i" style="left:376px;top:620px" width="10" height="12" viewBox="0 0 10 12"><path d="M0.5 10.5H8.5V4.5L4.5 0.5L0.5 4.5Z" fill="#fff" stroke="#c6c6c6" stroke-width="1"/><path d="M2.5 6.5H6.5" stroke="#c6c6c6" stroke-width="1"/></svg>
<svg class="i" style="left:376px;top:673px" width="10" height="12" viewBox="0 0 10 12"><path d="M0.5 0.5H8.5V6.5L4.5 10.5L0.5 6.5Z" fill="#fff" stroke="#c6c6c6" stroke-width="1"/><path d="M2.5 4.5H6.5" stroke="#c6c6c6" stroke-width="1"/></svg>
<svg class="i" style="left:376px;top:688px" width="10" height="12" viewBox="0 0 10 12"><path d="M0.5 10.5H8.5V4.5L4.5 0.5L0.5 4.5Z" fill="#fff" stroke="#c6c6c6" stroke-width="1"/><path d="M2.5 6.5H6.5" stroke="#c6c6c6" stroke-width="1"/></svg>
<svg class="i" style="left:376px;top:741px" width="10" height="12" viewBox="0 0 10 12"><path d="M0.5 0.5H8.5V6.5L4.5 10.5L0.5 6.5Z" fill="#fff" stroke="#c6c6c6" stroke-width="1"/><path d="M2.5 4.5H6.5" stroke="#c6c6c6" stroke-width="1"/></svg>
<svg class="i" style="left:376px;top:773px" width="10" height="12" viewBox="0 0 10 12"><path d="M0.5 10.5H8.5V4.5L4.5 0.5L0.5 4.5Z" fill="#fff" stroke="#c6c6c6" stroke-width="1"/><path d="M2.5 6.5H6.5" stroke="#c6c6c6" stroke-width="1"/></svg>
<div class="box" style="left:381px;top:205px;width:210px;height:26px;"></div>
<div class="box" style="left:380px;top:292px;width:380px;height:28px;"></div>
<div class="a" style="left:389px;top:327px;width:628px;height:3px;background:#23cdc5;border-radius:1px"></div>
<div class="a" style="left:389px;top:328px;width:3px;height:130px;background:#23cdc5"></div>
<div class="a" style="left:1014px;top:328px;width:3px;height:131px;background:#23cdc5"></div>
</body></html>
